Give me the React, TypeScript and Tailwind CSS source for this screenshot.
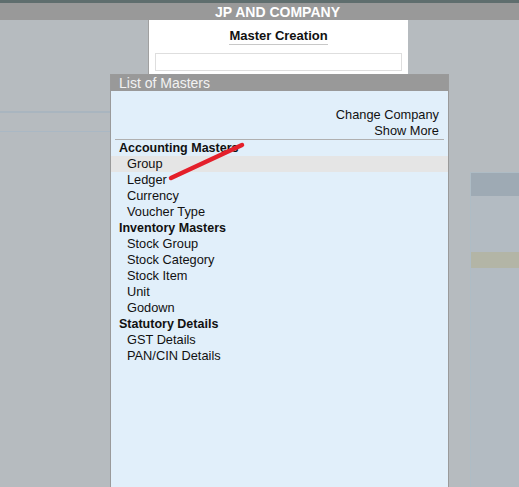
const accounting = ["Group", "Ledger", "Currency", "Voucher Type"];
const inventory = ["Stock Group", "Stock Category", "Stock Item", "Unit", "Godown"];
const statutory = ["GST Details", "PAN/CIN Details"];

function Section({ title, items, active }: { title: string; items: string[]; active?: string }) {
  return (
    <div>
      <div className="px-2 font-bold text-[12.5px] leading-[16px] text-[#111]">{title}</div>
      {items.map((item) => (
        <div
          key={item}
          className={`pl-4 text-[12.8px] leading-[16px] text-[#111] ${item === active ? "bg-[#e5e5e5]" : ""}`}
        >
          {item}
        </div>
      ))}
    </div>
  );
}

export default function App() {
  return (
    <div
      className="relative h-[487px] w-[519px] overflow-hidden bg-[#b6bbbf]"
      style={{ fontFamily: '"Liberation Sans", Arial, sans-serif' }}
    >
      {/* top company bar */}
      <div className="h-[3px] bg-[#5f6e6e]" />
      <div className="flex h-[17px] items-center justify-center bg-[#999999] pl-[36px] text-[14px] font-bold leading-none text-white">
        JP AND COMPANY
      </div>

      {/* background screen */}
      <div className="flex flex-col">
        <div className="ml-[148px] flex h-[54px] w-[260px] flex-col items-center border-l border-[#a0a0a0] bg-white">
          <div className="mt-[8px] border-b border-[#c8c8c8] text-[13px] font-bold leading-[16px] text-[#111]">
            Master Creation
          </div>
          <div className="mt-[8px] h-[18px] w-[247px] border border-[#dedede] bg-white" />
        </div>
        <div className="mt-[37px] h-[2px] w-[148px] bg-[#a9b5bf]" />
        <div className="mt-[18px] h-px w-[148px] bg-[#aab8c4]" />
        <div className="ml-[470px] mt-[40px] flex h-[320px] flex-col border-l border-t border-[#aebcc5] bg-[#b3bbc2]">
          <div className="h-[23px] bg-[#9eaab4]" />
          <div className="mt-[56px] h-[16px] bg-[#b3b5a6]" />
        </div>
      </div>

      {/* List of Masters popup */}
      <div className="absolute left-[110px] top-[74px] flex h-[420px] w-[339px] flex-col border border-[#9a9a9a] bg-[#e1effa]">
        <div className="flex h-[16px] items-center bg-[#999999] px-2 text-[14px] leading-none text-[#f2f2f2]">
          List of Masters
        </div>
        <div className="mt-[16px] flex flex-col items-end px-[9px] text-[12.8px] leading-[16px] text-[#111]">
          <div>Change Company</div>
          <div>Show More</div>
        </div>
        <div className="mx-[4px] h-px bg-[#b0b0b0]" />
        <Section title="Accounting Masters" items={accounting} active="Group" />
        <Section title="Inventory Masters" items={inventory} />
        <Section title="Statutory Details" items={statutory} />
      </div>

      {/* red annotation stroke */}
      <svg className="pointer-events-none absolute left-0 top-0" width="519" height="487">
        <line x1="171" y1="178" x2="242" y2="145" stroke="#e41f2a" strokeWidth="4.5" strokeLinecap="round" />
      </svg>
    </div>
  );
}
